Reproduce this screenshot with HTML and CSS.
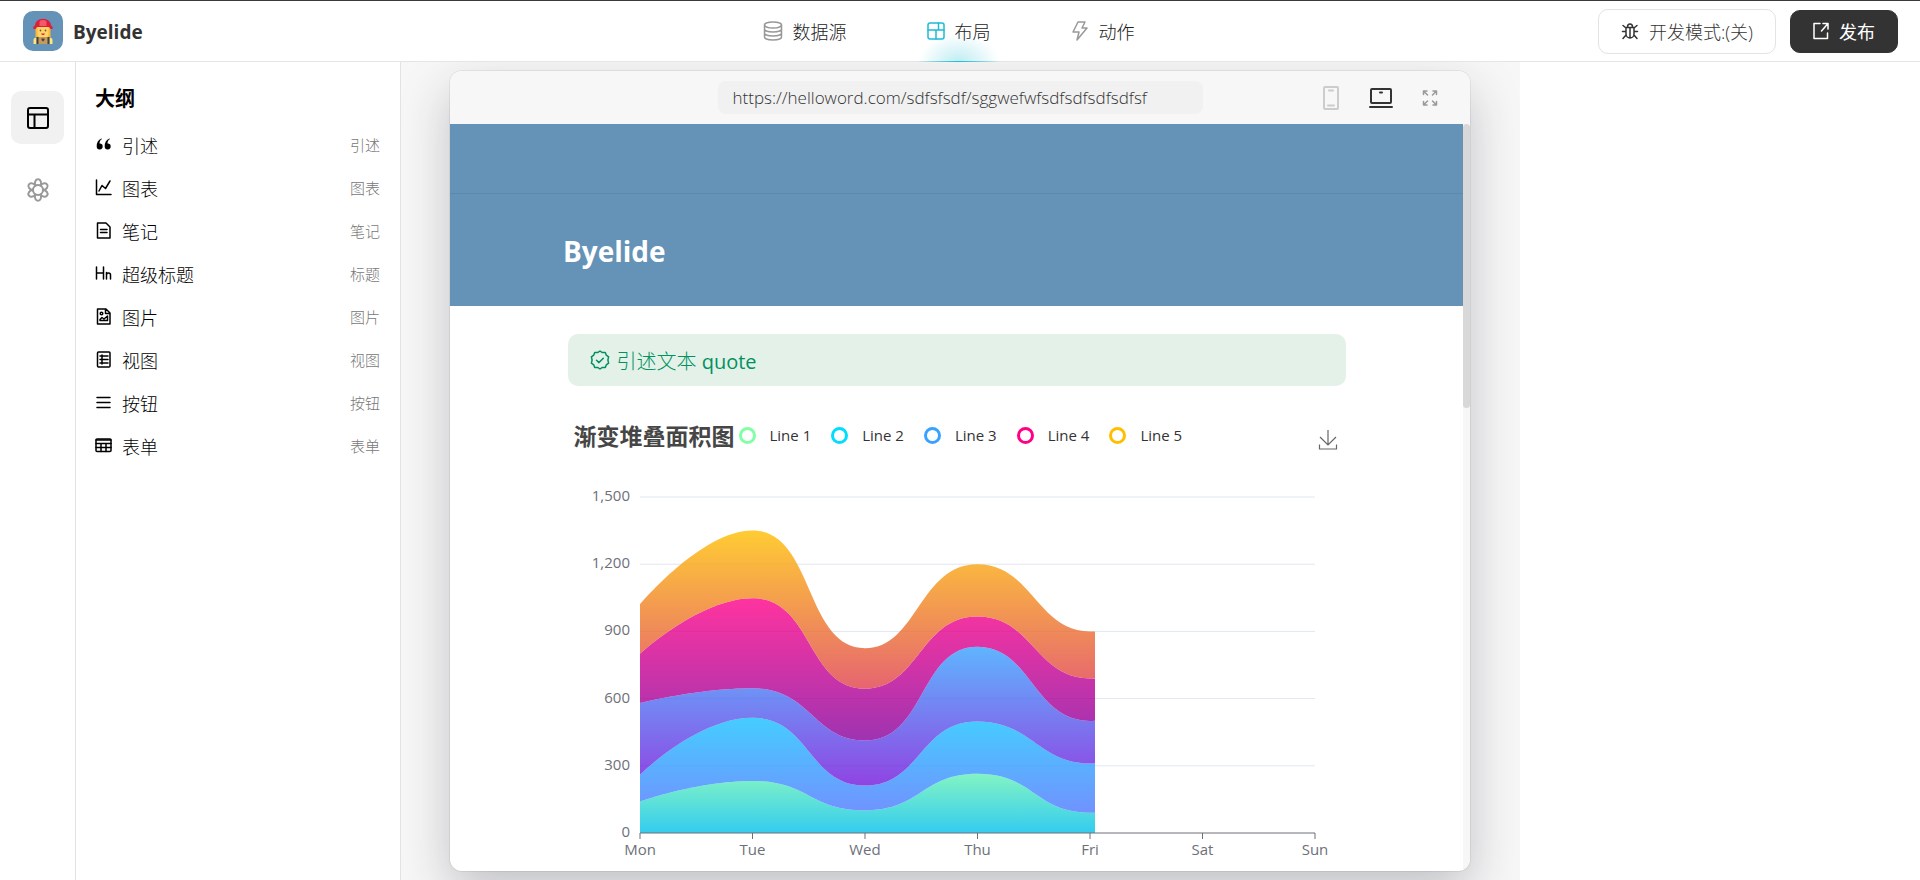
FILE: index.html
```
<!DOCTYPE html>
<html lang="zh-CN">
<head>
<meta charset="utf-8">
<title>Byelide</title>
<link rel="stylesheet" href="styles.css">
</head>
<body>
<header class="topbar">
  <div class="brand">
    <span class="brand-logo">
      <svg width="20" height="26" viewBox="0 0 20 26" aria-hidden="true">
        <path d="M2.500 9h15v10h-15z" fill="#ffb636"/>
        <path d="M4.500 8h11v7.500a5 5 0 0 1-11 0z" fill="#ffd469"/>
        <path d="M0.500 26v-4q0-2.500 3-2.500l6.500.500 6.500-.500q3 0 3 2.500v4z" fill="#ffe37b"/>
        <path d="M3.500 19h13v7h-13z" fill="#c79a5b"/>
        <path d="M3.500 19h2v7h-2zM14.500 19h2v7h-2z" fill="#3e4347"/>
        <path d="M8.500 20.500h3v1.500l-1.500 1.500-1.500-1.500z" fill="#3e4347"/>
        <circle cx="7.500" cy="12.500" r=".9" fill="#7d5533"/><circle cx="12.500" cy="12.500" r=".9" fill="#7d5533"/>
        <path d="M8 15.500h4l-1 1.500h-2z" fill="#e2263d"/>
        <path d="M0.500 11q-1-2.500 1.500-3.500Q3 .8 10 .8T18 7.500q2.500 1 1.500 3.500h-2l-1.500-2H4l-1.500 2z" fill="#dd1f3b"/>
        <path d="M6.500 8V4q0-2 3.500-2t3.500 2v4z" fill="#f2596b"/>
      </svg>
    </span>
    <h1 class="brand-name">Byelide</h1>
  </div>
  <nav class="tabs">
    <a class="tab" href="#data">
      <svg class="icon muted" width="20" height="20" viewBox="0 0 20 20"><ellipse cx="10" cy="4" rx="8.500" ry="3"/><path d="M1.500 4v12c0 1.700 3.800 3 8.500 3s8.500-1.300 8.500-3V4M1.500 8c0 1.700 3.800 3 8.500 3s8.500-1.300 8.500-3M1.500 12c0 1.700 3.800 3 8.500 3s8.500-1.300 8.500-3"/></svg>
      数据源</a>
    <a class="tab tab-active" href="#layout" aria-current="page">
      <svg class="icon" width="18" height="18" viewBox="0 0 18 18"><rect x="1" y="1" width="16" height="16" rx="2"/><path d="M1 8h16M11.500 1v7M9 8v9"/></svg>
      布局</a>
    <a class="tab" href="#action">
      <svg class="icon muted" width="18" height="20" viewBox="0 0 18 20"><path d="M7 1h7l-3 6h5L6 19l2-8H2z"/></svg>
      动作</a>
  </nav>
  <div class="actions">
    <button class="btn" type="button">
      <svg class="icon" width="18" height="18" viewBox="0 0 18 18"><path d="M5 5.500h8V12a4 4 0 0 1-8 0zM6.500 5a2.500 3 0 0 1 5 0M9 6v9.500M1.500 9.500H5M13 9.500h3.500M2 3.500l3 2.500M16 3.500l-3 2.500M2 16.500l3-3.500M16 16.500l-3-3.500"/></svg>
      开发模式:(关)</button>
    <button class="btn btn-dark" type="button">
      <svg class="icon" width="16" height="18" viewBox="0 0 16 18"><path d="M7 1.500H1v15h13.500V11M10 1.500h5V7M15 1.500L8.500 9"/></svg>
      发布</button>
  </div>
</header>
<div class="workspace">
  <nav class="rail">
    <button class="rail-btn rail-btn-active" type="button" aria-label="布局">
      <svg class="icon thick" width="22" height="22" viewBox="0 0 22 22"><rect x="1" y="1" width="20" height="20" rx="2"/><path d="M1 7.500h20M7.500 7.500V21"/></svg>
    </button>
    <button class="rail-btn" type="button" aria-label="组件">
      <svg class="icon thick muted" width="24" height="24" viewBox="0 0 24 24"><circle cx="12" cy="12" r="5"/><g id="petals"><path d="M9 7.800C8.500 4 9.500 1.300 12 1.300s3.500 2.700 3 6.500"/><path d="M9 7.800C8.500 4 9.500 1.300 12 1.300s3.500 2.700 3 6.500" transform="rotate(60 12 12)"/><path d="M9 7.800C8.500 4 9.500 1.300 12 1.300s3.500 2.700 3 6.500" transform="rotate(120 12 12)"/></g><use href="#petals" transform="rotate(180 12 12)"/></svg>
    </button>
  </nav>
  <aside class="outline">
    <h2 class="outline-title">大纲</h2>
    <ul class="outline-list">
      <li class="outline-item"><svg width="17" height="17" viewBox="0 0 17 17"><path d="M7 3Q4.500 4 4.500 7.500a3 3 0 1 1-2.800 3Q1.500 4.500 6.500 2.500zM15 3q-2.500 1-2.500 4.500a3 3 0 1 1-2.800 3Q9.500 4.500 14.500 2.500z"/></svg><span>引述</span><small>引述</small></li>
      <li class="outline-item"><svg class="icon" width="17" height="17" viewBox="0 0 17 17"><path d="M1.500 1v14.500H16M4 12l3-5.500 3.500 3L15 2"/></svg><span>图表</span><small>图表</small></li>
      <li class="outline-item"><svg class="icon" width="17" height="17" viewBox="0 0 17 17"><path d="M2.500 1h8.500l4 4v11h-12.500zM5.500 7.500h6.500M5.500 10.500h6.500"/></svg><span>笔记</span><small>笔记</small></li>
      <li class="outline-item"><svg class="icon" width="17" height="17" viewBox="0 0 17 17"><path d="M1.500 2v12M8.500 2v12M1.500 8h7M11.500 7.500V14M11.500 10q0-2 2-2t2 2v4"/></svg><span>超级标题</span><small>标题</small></li>
      <li class="outline-item"><svg class="icon" width="17" height="17" viewBox="0 0 17 17"><path d="M2.500 1h8.500l4 4v11h-12.500zM10.500 1v4.500H15M5 12.500h7.500V8L9 11l-2-1.500-2 2z"/><circle cx="6.500" cy="5.500" r="1.300"/></svg><span>图片</span><small>图片</small></li>
      <li class="outline-item"><svg class="icon" width="17" height="17" viewBox="0 0 17 17"><rect x="2.500" y="1" width="12.500" height="15" rx="1"/><path d="M5 5h8M5 8.500h8M5 12h8M7 4v9"/></svg><span>视图</span><small>视图</small></li>
      <li class="outline-item"><svg class="icon" width="17" height="17" viewBox="0 0 17 17"><path d="M2 3.500h13M2 8.500h13M2 13.500h13"/></svg><span>按钮</span><small>按钮</small></li>
      <li class="outline-item"><svg class="icon" width="17" height="17" viewBox="0 0 17 17"><rect x="1" y="2" width="15" height="12.500" rx="1"/><path d="M1 3h15M1 6.500h15M1 10.500h15M6 6.500v8M11 6.500v8"/></svg><span>表单</span><small>表单</small></li>
    </ul>
  </aside>
  <main class="canvas">
    <section class="window">
      <div class="window-bar">
        <input class="url" type="text" aria-label="URL" value="https://helloword.com/sdfsfsdf/sggwefwfsdfsdfsdfsdfsf">
        <div class="devices">
          <button class="device device-off" type="button" aria-label="手机"><svg class="icon thick" width="18" height="24" viewBox="0 0 18 24"><rect x="2" y="1" width="14" height="22" rx="1"/><path d="M7 4.500h4M6 19.500h6"/></svg></button>
          <button class="device" type="button" aria-label="电脑"><svg class="icon thick" width="24" height="22" viewBox="0 0 24 22"><rect x="2" y="2" width="20" height="14" rx="1"/><path d="M1 20h22M11 5.500h2"/></svg></button>
          <button class="device device-dim" type="button" aria-label="全屏"><svg class="icon" width="16" height="18" viewBox="0 0 16 18"><path d="M1.500 5.500V2H5M1.500 2l4 4M11 2h3.500v3.500M14.500 2l-4 4M1.500 12.500V16H5M1.500 16l4-4M11 16h3.500v-3.500M14.500 16l-4-4"/></svg></button>
        </div>
      </div>
      <div class="viewport">
        <div class="page">
          <div class="page-nav"></div>
          <div class="hero"><h2 class="hero-title">Byelide</h2></div>
          <div class="page-body">
            <blockquote class="quote">
              <svg class="icon" width="20" height="20" viewBox="0 0 20 20"><path d="M10 1l2.400 1.600 2.900-.1 1 2.700 2.300 1.700L17.900 10l.7 3.100-2.300 1.700-1 2.700-2.900-.1L10 19l-2.400-1.600-2.900.1-1-2.700-2.300-1.700.7-3.100-.7-3.100 2.300-1.700 1-2.700 2.900.1zM6.500 10.200l2.500 2.400 4.300-4.400"/></svg>
              <p>引述文本 <span class="quote-latin">quote</span></p>
            </blockquote>
            <figure class="chart">
              <figcaption class="chart-head">
                <h3 class="chart-title">渐变堆叠面积图</h3>
                <ul class="legend">
                  <li class="legend-item line-1">Line 1</li>
                  <li class="legend-item line-2">Line 2</li>
                  <li class="legend-item line-3">Line 3</li>
                  <li class="legend-item line-4">Line 4</li>
                  <li class="legend-item line-5">Line 5</li>
                </ul>
                <button class="download" type="button" aria-label="下载"><svg width="20" height="22" viewBox="0 0 20 22"><path d="M10 1v15M2 8l8 8 8-8M1.500 15.500v4.500h17v-4.500"/></svg></button>
              </figcaption>
              <svg class="plot" viewBox="0 0 778 396" role="img" aria-label="渐变堆叠面积图"></svg>
            </figure>
          </div>
        </div>
        <div class="track"><div class="thumb"></div></div>
      </div>
    </section>
  </main>
  <aside class="inspector"></aside>
</div>
<script src="chart.js"></script>
</body>
</html>
```
FILE: chart.js
```
(() => {
  const NS = 'http://www.w3.org/2000/svg';
  const plot = document.querySelector('.plot');
  const days = ['Mon', 'Tue', 'Wed', 'Thu', 'Fri', 'Sat', 'Sun'];
  const series = [
    { data: [140, 232, 101, 264, 90, 340, 250], from: 'rgb(128,255,165)', to: 'rgb(1,191,236)' },
    { data: [120, 282, 111, 234, 220, 340, 310], from: 'rgb(0,221,255)', to: 'rgb(77,119,255)' },
    { data: [320, 132, 201, 334, 190, 130, 220], from: 'rgb(55,162,255)', to: 'rgb(116,21,219)' },
    { data: [220, 402, 231, 134, 190, 230, 120], from: 'rgb(255,0,135)', to: 'rgb(135,0,157)' },
    { data: [220, 302, 181, 234, 210, 290, 150], from: 'rgb(255,191,0)', to: 'rgb(224,62,76)' }
  ];
  const left = 72, right = 747, top = 26, bottom = 362, max = 1500;
  const revealed = 455;
  const xAt = i => left + (right - left) * i / (days.length - 1);
  const yAt = v => bottom - (bottom - top) * v / max;

  function add(parent, name, attrs, text) {
    const el = document.createElementNS(NS, name);
    for (const key in attrs) el.setAttribute(key, attrs[key]);
    if (text) el.textContent = text;
    parent.appendChild(el);
    return el;
  }

  const clamp = (v, a, b) => Math.max(Math.min(a, b), Math.min(Math.max(a, b), v));

  // Cubic segments through the points, with handles kept inside each step.
  function smooth(pts) {
    const out = [];
    let c0 = pts[0];
    for (let i = 1; i < pts.length; i++) {
      const p = pts[i - 1], q = pts[i], n = pts[i + 1];
      let c1 = q, next = q;
      if (n) {
        const lp = Math.hypot(q[0] - p[0], q[1] - p[1]);
        const ln = Math.hypot(n[0] - q[0], n[1] - q[1]);
        const r = ln / (ln + lp);
        next = [0, 1].map(k => clamp(q[k] + (n[k] - p[k]) * 0.5 * r, n[k], q[k]));
        c1 = [0, 1].map(k => clamp(q[k] - (next[k] - q[k]) * lp / ln, p[k], q[k]));
        next = [0, 1].map(k => q[k] + (q[k] - c1[k]) * ln / lp);
      }
      out.push([p, c0, c1, q]);
      c0 = next;
    }
    return out;
  }

  const defs = add(plot, 'defs', {});
  add(add(defs, 'clipPath', { id: 'reveal' }), 'rect', { x: left, y: 0, width: revealed, height: bottom });

  for (let v = 0; v <= max; v += 300) {
    if (v) add(plot, 'line', { class: 'grid', x1: left, x2: right, y1: yAt(v), y2: yAt(v) });
    add(plot, 'text', { class: 'axis-label end', x: left - 10, y: yAt(v) + 4 }, v.toLocaleString('en-US'));
  }

  const areas = add(plot, 'g', { 'clip-path': 'url(#reveal)' });
  let totals = days.map(() => 0);
  let base = smooth(totals.map((v, i) => [xAt(i), yAt(v)]));
  series.forEach((s, k) => {
    const g = add(defs, 'linearGradient', { id: 'fill' + k, x1: 0, y1: 0, x2: 0, y2: 1 });
    add(g, 'stop', { offset: 0, 'stop-color': s.from });
    add(g, 'stop', { offset: 1, 'stop-color': s.to });
    totals = totals.map((v, i) => v + s.data[i]);
    const line = smooth(totals.map((v, i) => [xAt(i), yAt(v)]));
    let d = 'M' + line[0][0];
    line.forEach(c => { d += 'C' + [c[1], c[2], c[3]].join(' '); });
    d += 'L' + base[base.length - 1][3];
    base.slice().reverse().forEach(c => { d += 'C' + [c[2], c[1], c[0]].join(' '); });
    add(areas, 'path', { d: d + 'Z', fill: `url(#fill${k})`, 'fill-opacity': 0.8 });
    base = line;
  });

  add(plot, 'line', { class: 'axis', x1: left, x2: right, y1: bottom, y2: bottom });
  days.forEach((day, i) => {
    add(plot, 'line', { class: 'axis', x1: xAt(i), x2: xAt(i), y1: bottom, y2: bottom + 6 });
    add(plot, 'text', { class: 'axis-label', x: xAt(i), y: bottom + 22 }, day);
  });
})();
```
FILE: styles.css
```
*, *::before, *::after { box-sizing: border-box; }
body, h1, h2, h3, p, ul, figure, blockquote { margin: 0; padding: 0; }
ul { list-style: none; }
body {
  display: flex;
  flex-direction: column;
  height: 100vh;
  overflow: hidden;
  font-family: "Open Sans", "Noto Sans CJK SC", sans-serif;
  font-weight: 300;
  color: #333;
  background: #fff;
}
button, input { font: inherit; color: inherit; border: 0; background: none; padding: 0; }
svg { display: block; flex: none; }
.icon { fill: none; stroke: currentColor; stroke-width: 1.5; stroke-linejoin: round; stroke-linecap: round; }
.thick { stroke-width: 2; }
.muted { color: #999; }

.topbar {
  display: grid;
  grid-template-columns: 1fr auto 1fr;
  align-items: center;
  height: 62px;
  flex: none;
  padding: 0 22px 0 23px;
  border-top: 1px solid #3a3a3a;
  border-bottom: 1px solid #e5e5e5;
}
.brand { display: flex; align-items: center; gap: 10px; }
.brand-logo {
  display: grid;
  place-items: center;
  width: 40px;
  height: 40px;
  border-radius: 10px;
  background: #6592b7;
}
.brand-name { font-size: 19px; line-height: 28px; padding-top: 2px; font-weight: 700; }
.tabs { display: flex; align-self: stretch; gap: 80px; padding-right: 24px; }
.tab {
  display: flex;
  align-items: center;
  gap: 10px;
  font-size: 18px;
  color: #222;
  text-decoration: none;
}
.tab-active { position: relative; }
.tab-active .icon { color: #1bbcd6; }
.tab-active::before {
  content: "";
  position: absolute;
  left: -10px;
  right: -10px;
  bottom: -1px;
  height: 30px;
  background: radial-gradient(ellipse 40px 28px at 50% 100%, rgba(27, 188, 214, .28), transparent);
}
.tab-active::after {
  content: "";
  position: absolute;
  left: -10px;
  right: -10px;
  bottom: -1px;
  height: 1px;
  background: linear-gradient(90deg, transparent, #1bbcd6, transparent);
}
.actions { display: flex; align-items: center; justify-content: flex-end; gap: 14px; }
.btn {
  display: flex;
  align-items: center;
  gap: 10px;
  height: 45px;
  padding: 0 22px;
  border: 1px solid #e3e3e3;
  border-radius: 10px;
  font-size: 18px;
}
.btn-dark { height: 43px; border-color: #333; background: #333; color: #fff; font-weight: 400; }

.workspace { display: flex; flex: 1; min-height: 0; }
.rail {
  display: flex;
  flex-direction: column;
  gap: 19px;
  flex: none;
  width: 76px;
  padding: 29px 11px 0;
  border-right: 1px solid #e3e3e3;
}
.rail-btn { display: grid; place-items: center; width: 53px; height: 53px; border-radius: 10px; }
.rail-btn-active { background: #f1f1f1; color: #000; }

.outline { flex: none; width: 325px; padding: 21px 20px 0 19px; border-right: 1px solid #e3e3e3; color: #000; }
.outline-title { font-size: 20px; line-height: 32px; font-weight: 700; }
.outline-list { padding-top: 8px; }
.outline-item { display: flex; align-items: center; gap: 10px; height: 43px; font-size: 18px; }
.outline-item small { margin-left: auto; font-size: 15px; color: #777; }

.canvas { display: flex; flex: 1; min-width: 0; padding: 9px 50px 9px 49px; background: #f7f7f7; overflow: hidden; }
.inspector { flex: none; width: 400px; }
.window {
  display: flex;
  flex-direction: column;
  flex: 1;
  min-width: 0;
  border-radius: 12px;
  background: #fff;
  overflow: hidden;
  box-shadow: 0 0 0 1px rgba(0, 0, 0, .06), 0 20px 50px rgba(30, 35, 50, .25);
}
.window-bar {
  display: grid;
  grid-template-columns: 1fr 485px 1fr;
  align-items: center;
  height: 53px;
  flex: none;
  padding: 0 32px;
  background: #f7f7f7;
}
.url {
  grid-column: 2;
  height: 33px;
  padding: 0 15px;
  border-radius: 8px;
  background: #f1f1f1;
  font-size: 17px;
  font-weight: 300;
  color: #333;
}
.devices { display: flex; align-items: center; justify-content: flex-end; gap: 29px; }
.device-off { color: #ccc; }
.device-dim { color: #999; }

.viewport { display: flex; flex: 1; min-height: 0; }
.page { flex: 1; min-width: 0; overflow: hidden; }
.track { flex: none; width: 7px; background: #f7f7f7; }
.thumb { height: 38%; border-radius: 4px; background: #d8d8d8; }
.page-nav { height: 70px; background: #6592b7; border-bottom: 1px solid #5b88ad; }
.hero { padding: 37px 113px 35px; background: #6592b7; }
.hero-title { font-size: 28px; line-height: 40px; font-weight: 700; color: #fff; }
.page-body { max-width: 778px; margin: 28px auto 0; }
.quote {
  display: flex;
  align-items: center;
  gap: 7px;
  height: 52px;
  padding: 0 22px;
  border-radius: 10px;
  background: #e4f1e8;
  font-size: 20px;
  color: #00915f;
}
.quote-latin { font-weight: 400; }
.chart { margin-top: 29px; }
.chart-head { display: flex; align-items: center; height: 40px; padding: 0 8px 0 6px; }
.chart-title { font-size: 23px; font-weight: 700; color: #464646; }
.legend { display: flex; gap: 20px; padding-left: 4px; font-size: 15px; font-weight: 400; }
.legend-item { display: flex; align-items: center; gap: 14px; }
.legend-item::before { content: ""; width: 17px; height: 17px; border: 3px solid; border-radius: 50%; }
.line-1::before { border-color: #80ffa5; }
.line-2::before { border-color: #00ddff; }
.line-3::before { border-color: #37a2ff; }
.line-4::before { border-color: #ff0087; }
.line-5::before { border-color: #ffbf00; }
.download { margin-left: auto; padding-top: 10px; }
.download svg { fill: none; stroke: #666; stroke-width: 1.2; }
.plot { width: 100%; height: auto; margin-top: 16px; }
.grid { stroke: #e0e6f1; }
.axis { stroke: #6e7079; }
.axis-label { font-size: 15px; font-weight: 400; fill: #6e7079; text-anchor: middle; }
.end { text-anchor: end; }
```
